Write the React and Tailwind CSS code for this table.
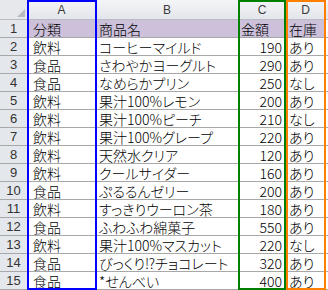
import React from "react";

const rows = [
  ["分類", "商品名", "金額", "在庫"],
  ["飲料", "コーヒーマイルド", "190", "あり"],
  ["食品", "さわやかヨーグルト", "290", "あり"],
  ["食品", "なめらかプリン", "250", "なし"],
  ["飲料", "果汁100%レモン", "200", "あり"],
  ["飲料", "果汁100%ピーチ", "210", "なし"],
  ["飲料", "果汁100%グレープ", "220", "あり"],
  ["飲料", "天然水クリア", "120", "あり"],
  ["飲料", "クールサイダー", "160", "あり"],
  ["食品", "ぷるるんゼリー", "200", "あり"],
  ["飲料", "すっきりウーロン茶", "180", "あり"],
  ["食品", "ふわふわ綿菓子", "550", "あり"],
  ["飲料", "果汁100%マスカット", "220", "なし"],
  ["食品", "びっくり⁉チョコレート", "320", "あり"],
  ["食品", "*せんべい", "400", "あり"],
];

export default function App() {
  return (
    <div className="relative w-[328px] h-[290px] overflow-hidden bg-white text-black font-light [font-feature-settings:'palt'] [font-family:'Noto_Sans_CJK_JP',sans-serif]">
      <div className="flex h-[20px] bg-gradient-to-b from-[#f4f5f7] to-[#e3e6ea] border-b border-[#b8bcc2]">
        <div className="relative w-[28px] shrink-0 border-r border-[#c4c8ce] bg-[#e6e8eb]">
          <div className="absolute right-[2px] bottom-[2px] w-0 h-0 border-l-[8px] border-l-transparent border-b-[8px] border-b-[#b8bcc0]" />
        </div>
        {[
          ["A", "w-[68px]"],
          ["B", "w-[143px]"],
          ["C", "w-[47px]"],
          ["D", "w-[40px]"],
        ].map(([l, w]) => (
          <div key={l} className={`${w} shrink-0 border-r border-[#c4c8ce] flex items-center justify-center text-[12px] font-normal text-[#3c3c3c] [font-family:'Liberation_Sans',sans-serif]`}>
            {l}
          </div>
        ))}
        <div className="flex-1" />
      </div>
      {rows.map((r, i) => (
        <div key={i} className="flex h-[18px] border-b border-[#a8a8a8]">
          <div className="w-[28px] shrink-0 border-r border-[#b8bcc2] bg-[#e4e7eb] flex items-center justify-center text-[13px] font-normal text-[#333] [font-family:'Liberation_Sans',sans-serif]">
            {i + 1}
          </div>
          <div className={`w-[68px] shrink-0 border-r border-[#a8a8a8] pl-[5px] flex items-center text-[14px] leading-none ${i === 0 ? "bg-[#ccc0da]" : ""}`}>{r[0]}</div>
          <div className={`w-[143px] shrink-0 border-r border-[#a8a8a8] pl-[3px] flex items-center text-[14px] leading-none whitespace-nowrap overflow-hidden ${i === 0 ? "bg-[#ccc0da]" : ""}`}>{r[1]}</div>
          <div className={`w-[47px] shrink-0 border-r border-[#a8a8a8] pr-[3px] flex items-center ${i === 0 ? "justify-start pl-[2px]" : "justify-end"} text-[14px] leading-none ${i === 0 ? "bg-[#ccc0da]" : ""}`}>{r[2]}</div>
          <div className={`w-[40px] shrink-0 border-r border-[#a8a8a8] pl-[3px] flex items-center text-[14px] leading-none ${i === 0 ? "bg-[#ccc0da]" : ""}`}>{r[3]}</div>
          <div className="flex-1" />
        </div>
      ))}
      <div className="absolute left-[27px] top-0 w-[70px] h-[290px] border-2 border-[#0000ff]" />
      <div className="absolute left-[238px] top-0 w-[48px] h-[290px] border-2 border-[#008000]" />
      <div className="absolute left-[286px] top-0 w-[40px] h-[290px] border-2 border-[#ff7f00]" />
    </div>
  );
}
